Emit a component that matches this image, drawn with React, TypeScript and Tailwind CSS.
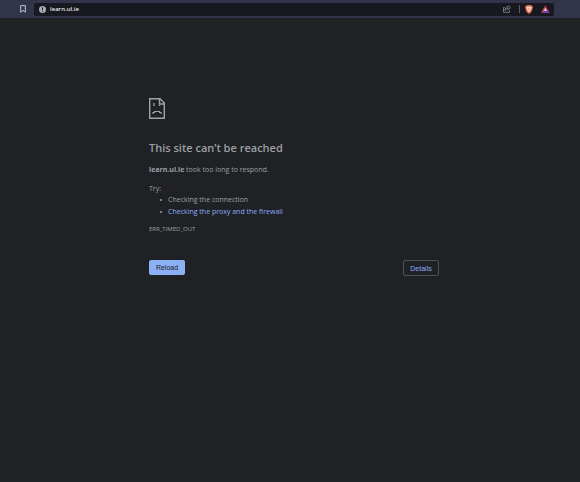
import type { ReactNode } from "react";

function ToolbarButton({ label, children }: { label: string; children: ReactNode }) {
  return (
    <button type="button" aria-label={label} className="flex flex-shrink-0 items-center justify-center">
      {children}
    </button>
  );
}

function BookmarkIcon() {
  return (
    <svg width="6" height="8" viewBox="0 0 6 8" fill="none" stroke="#c3c4cd" strokeWidth="1">
      <path d="M0.7 0.6h4.6v6.6L3 5.4 0.7 7.2z" />
    </svg>
  );
}

function InfoIcon() {
  return (
    <svg width="7" height="7" viewBox="0 0 14 14">
      <circle cx="7" cy="7" r="7" fill="#a9abb3" />
      <path d="M7 2.8v5M7 9.4v1.8" stroke="#16171f" strokeWidth="2" />
    </svg>
  );
}

function ShareIcon() {
  return (
    <svg width="8" height="8" viewBox="0 0 16 16" fill="none" stroke="#92949c" strokeWidth="1.5">
      <path d="M3.5 5H1v9.5h12V11" />
      <path d="M10 1.5L15 5.5l-5 4V7.2C7 7.2 5.2 8.5 4 11c0-4 2-7 6-7.2z" strokeLinejoin="round" />
    </svg>
  );
}

function ShieldIcon() {
  return (
    <svg width="8" height="9" viewBox="0 0 16 18">
      <path d="M4.5 0h7l1.6 1.7L15 1.5l1 3-.6 1.5-1.9 7.5L8 18l-5.5-4.5L.6 6 0 4.5l1-3 1.9.2z" fill="#e2683f" />
      <path d="M8 3.5l4-.5 1.5 2.8-2.3 3 .4 1.5L8 12.5l-3.6-2.2.4-1.5-2.3-3L4 3z" fill="#f6dccf" />
      <path d="M6 13l2-1 2 1-2 2z" fill="#f6dccf" />
      <path d="M7.2 6h1.6v3.5H7.2z" fill="#e2683f" />
    </svg>
  );
}

function RewardsIcon() {
  return (
    <svg width="9" height="8" viewBox="0 0 18 16">
      <path d="M9 0L0 16l9-5z" fill="#d8503f" />
      <path d="M9 0l9 16-9-5z" fill="#9c2f63" />
      <path d="M0 16l9-5 9 5z" fill="#6b4bb8" />
      <path d="M9 6l3 5.5H6z" fill="#f3e9f2" />
    </svg>
  );
}

function SadPageIcon() {
  return (
    <svg width="16" height="21" viewBox="0 0 16 21" fill="none" stroke="#a0a4a9">
      <path d="M0.7 0.7h10.3l4.3 4.3v15.3H0.7z" strokeWidth="1.4" />
      <path d="M10.5 0.7v5.3h4.8" strokeWidth="1.4" />
      <path d="M5 5v3M10.5 7v1" strokeWidth="1.3" />
      <path d="M4 16v-1.5h1.5v-1h5v1H12V16" strokeWidth="1.1" />
    </svg>
  );
}

function Toolbar() {
  return (
    <header className="flex h-[18px] items-center bg-[#32354a] pr-[26px] pl-5">
      <ToolbarButton label="Bookmark this page">
        <BookmarkIcon />
      </ToolbarButton>
      <div className="ml-2 flex h-[13px] min-w-0 flex-1 items-center rounded-xs bg-[#181920] pr-1 pl-[5px]">
        <ToolbarButton label="Site information">
          <InfoIcon />
        </ToolbarButton>
        <input
          type="text"
          aria-label="Address"
          defaultValue="learn.ul.ie"
          className="ml-1 min-w-0 flex-1 bg-transparent text-[6px] leading-[11px] font-semibold text-[#e4e5ea] outline-none"
        />
        <ToolbarButton label="Share">
          <ShareIcon />
        </ToolbarButton>
        <span className="mr-[5px] ml-2 h-2 w-px bg-[#5b5c65]" />
        <ToolbarButton label="Shields">
          <ShieldIcon />
        </ToolbarButton>
        <span className="w-2" />
        <ToolbarButton label="Rewards">
          <RewardsIcon />
        </ToolbarButton>
      </div>
    </header>
  );
}

function Suggestion({ children }: { children: ReactNode }) {
  return (
    <li className="flex items-center gap-1.5 pl-[11px] before:size-0.5 before:rounded-full before:bg-[#9aa0a6] before:content-['']">
      {children}
    </li>
  );
}

export default function App() {
  return (
    <div className="min-h-screen bg-[#202124] font-['Open_Sans',sans-serif] text-[7px] leading-[11px] text-[#9aa0a6]">
      <Toolbar />
      <main className="mx-auto max-w-[298px] pt-20 pl-2">
        <SadPageIcon />
        <h1 className="mt-[21px] text-[11px] leading-4 font-semibold">This site can’t be reached</h1>
        <p className="mt-2">
          <strong className="font-bold">learn.ul.ie</strong> took too long to respond.
        </p>
        <p className="mt-2">Try:</p>
        <ul className="grid gap-px">
          <Suggestion>Checking the connection</Suggestion>
          <Suggestion>
            <a href="#buttons" className="text-[#8aaef6]">
              Checking the proxy and the firewall
            </a>
          </Suggestion>
        </ul>
        <p className="mt-[7px] text-[6px]">ERR_TIMED_OUT</p>
        <div id="buttons" className="mt-[25px] flex items-start justify-between font-['Liberation_Sans',sans-serif]">
          <button type="button" className="h-[15px] w-9 rounded-xs bg-[#8cb0f6] text-[#202124]">
            Reload
          </button>
          <button type="button" className="h-4 w-9 rounded-xs border border-[#4d5054] text-[#8aaef6]">
            Details
          </button>
        </div>
      </main>
    </div>
  );
}
